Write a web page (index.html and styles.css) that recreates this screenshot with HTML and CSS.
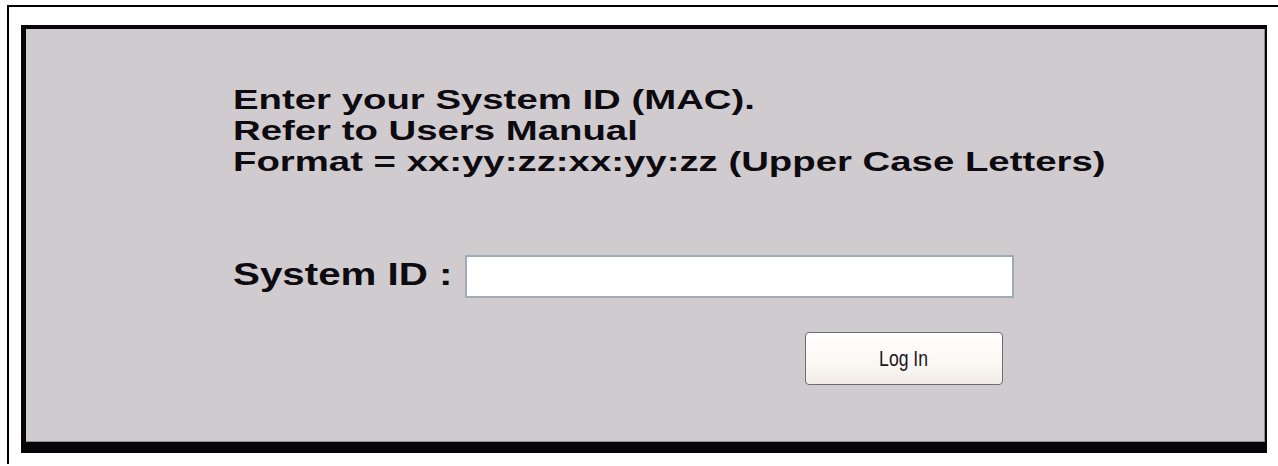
FILE: index.html
```html
<!DOCTYPE html>
<html lang="en">
<head>
<meta charset="utf-8">
<title>System Login</title>
<link rel="stylesheet" href="styles.css">
</head>
<body>
<div class="frame">
  <div class="panel">
    <form class="sheet" action="#" onsubmit="return false;">
      <div class="intro">
        <p class="line"><span class="wide">Enter your System ID (MAC).</span></p>
        <p class="line"><span class="wide">Refer to Users Manual</span></p>
        <p class="line"><span class="wide">Format = xx:yy:zz:xx:yy:zz (Upper Case Letters)</span></p>
      </div>
      <div class="field">
        <label class="label" for="sysid"><span class="wide wide-label">System ID :</span></label>
        <input class="input" id="sysid" type="text">
      </div>
      <div class="actions">
        <button class="btn" type="submit"><span class="btn-text">Log In</span></button>
      </div>
    </form>
  </div>
</div>
</body>
</html>
```
FILE: styles.css
```css
html, body {
  margin: 0;
  padding: 0;
  background: #ffffff;
}

body {
  height: 466px;
  overflow: hidden;
  font-family: "Liberation Sans", Arial, sans-serif;
}

/* thin black frame around the page, open to the right and bottom */
.frame {
  margin: 5px 0 0 7px;
  border-top: 2px solid #000;
  border-left: 2px solid #000;
  height: 459px;
  padding: 18px 0 0 12px;
  box-sizing: border-box;
}

/* dark drop-shadow box behind the grey sheet */
.panel {
  width: 1246px;
  height: 428px;
  background: #060507;
  padding: 4px 2px 11px 5px;
  box-sizing: border-box;
}

.sheet {
  height: 100%;
  margin: 0;
  background: #d0cbcf;
  border-right: 1px solid #8f8d8f;
  border-bottom: 1px solid #8f8d8f;
  box-sizing: border-box;
  padding: 56px 0 0 207px;
  display: flex;
  flex-direction: column;
}

.intro {
  display: flex;
  flex-direction: column;
}

.line {
  margin: 0;
  font-size: 27px;
  line-height: 31px;
  font-weight: bold;
  color: #0d0b10;
  white-space: nowrap;
}

/* the heading face is set wide */
.wide {
  display: inline-block;
  transform: scaleX(1.42);
  transform-origin: 0 50%;
}

.wide-label {
  transform: scaleX(1.3);
}

.field {
  display: flex;
  align-items: center;
  margin-top: 77px;
}

.label {
  width: 232px;
  flex: none;
  font-size: 31px;
  line-height: 32px;
  font-weight: bold;
  color: #0d0b10;
  white-space: nowrap;
  position: relative;
  top: -2px;
}

.input {
  width: 549px;
  height: 43px;
  box-sizing: border-box;
  margin: 0;
  border: 2px solid #a0abba;
  background: #ffffff;
  padding: 0 6px;
  font: 18px "Liberation Sans", Arial, sans-serif;
}

.actions {
  padding-left: 572px;
  margin-top: 34px;
}

.btn {
  width: 198px;
  height: 53px;
  box-sizing: border-box;
  margin: 0;
  padding: 0;
  border: 1px solid #6c6c70;
  border-radius: 4px;
  background: linear-gradient(#ffffff, #fbf7f3 60%, #f1ece6);
  font-family: "Liberation Sans", Arial, sans-serif;
  font-size: 22px;
  color: #1a1522;
  cursor: pointer;
}

/* the button caption is set condensed */
.btn-text {
  display: inline-block;
  transform: scaleX(0.8);
}
```
